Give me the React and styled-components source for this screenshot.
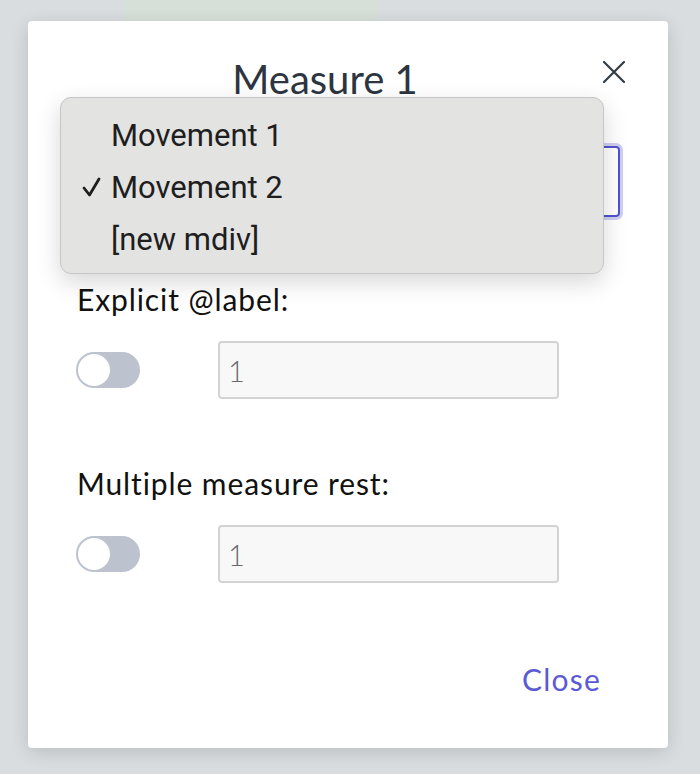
import React from 'react';
import styled, { createGlobalStyle } from 'styled-components';

const GlobalStyle = createGlobalStyle`
  html, body {
    margin: 0;
    padding: 0;
    background: #d9dddf;
  }
  * {
    box-sizing: border-box;
  }
`;

const Page = styled.div`
  width: 700px;
  height: 774px;
  overflow: hidden;
  background: #d9dddf;
  font-family: Lato, "Noto Sans", sans-serif;
`;

const BackStrip = styled.div`
  width: 254px;
  height: 21px;
  margin-left: 124px;
  background: #d6e0d9;
`;

const Modal = styled.div`
  position: relative;
  width: 640px;
  height: 727px;
  margin-left: 28px;
  background: #ffffff;
  border-radius: 4px;
  box-shadow: 0 4px 18px rgba(0, 0, 0, 0.14);
  display: flex;
  flex-direction: column;
  padding: 0 48px 0 49px;
`;

const Header = styled.div`
  display: flex;
  align-items: flex-start;
  padding-top: 35px;
`;

const Title = styled.h2`
  flex: 1;
  margin: 0 30px 0 0;
  text-align: center;
  font-weight: 400;
  font-size: 40px;
  line-height: 46px;
  color: #2c3541;
`;

const CloseIcon = styled.button`
  border: none;
  background: none;
  padding: 0;
  margin: 5px -5px 0 0;
  width: 22px;
  height: 22px;
  cursor: pointer;
  display: flex;
`;

const SelectBox = styled.div`
  margin-top: 44px;
  height: 71px;
  border: 2px solid #5252d0;
  border-radius: 4px;
  box-shadow: 0 0 0 3px #cfcff0;
`;

const Menu = styled.div`
  position: absolute;
  left: 32px;
  top: 76px;
  width: 544px;
  height: 177px;
  background: #e3e3e2;
  border: 1px solid #c6c6c6;
  border-radius: 11px;
  box-shadow: 0 8px 24px rgba(0, 0, 0, 0.16);
  padding-top: 11px;
  font-family: Roboto, "Liberation Sans", sans-serif;
`;

const MenuItem = styled.div`
  display: flex;
  align-items: center;
  height: 52px;
  font-size: 31px;
  color: #1e1e1e;
`;

const Check = styled.span`
  width: 50px;
  display: flex;
  justify-content: flex-end;
  padding-right: 10px;
`;

const Label = styled.div`
  font-size: 30px;
  line-height: 36px;
  letter-spacing: 0.9px;
  color: #111111;
  margin-top: ${p => p.$top}px;
`;

const Row = styled.div`
  display: flex;
  align-items: center;
  margin-top: ${p => p.$top}px;
`;

const Toggle = styled.div`
  width: 64px;
  height: 36px;
  border-radius: 18px;
  background: #bcc3ce;
  padding: 2px;
  margin-left: -1px;
  display: flex;
`;

const Knob = styled.div`
  width: 32px;
  height: 32px;
  border-radius: 50%;
  background: #ffffff;
`;

const NumberInput = styled.div`
  margin-left: 78px;
  width: 341px;
  height: 58px;
  background: #f8f8f8;
  border: 2px solid #d3d3d3;
  border-radius: 4px;
  padding-left: 8px;
  display: flex;
  align-items: center;
  font-size: 29px;
  font-weight: 300;
  color: #6a6a6a;
`;

const Footer = styled.div`
  margin-top: auto;
  display: flex;
  justify-content: flex-end;
  padding: 0 19px 51px 0;
`;

const CloseButton = styled.button`
  border: none;
  background: none;
  padding: 0;
  font-family: Lato, "Noto Sans", sans-serif;
  font-size: 30px;
  letter-spacing: 1.2px;
  color: #5a5ad4;
  cursor: pointer;
`;

const items = [
  { name: 'Movement 1', checked: false },
  { name: 'Movement 2', checked: true },
  { name: '[new mdiv]', checked: false },
];

const CheckMark = () => (
  <svg width="19" height="20" viewBox="0 0 19 20">
    <path d="M2 11 L7.5 18 L17 2" fill="none" stroke="#1e1e1e" strokeWidth="2.8" strokeLinecap="round" strokeLinejoin="round" />
  </svg>
);

export default function App() {
  return (
    <Page>
      <GlobalStyle />
      <BackStrip />
      <Modal>
        <Header>
          <Title>Measure 1</Title>
          <CloseIcon aria-label="close">
            <svg width="22" height="22" viewBox="0 0 22 22">
              <path d="M1 1 L21 21 M21 1 L1 21" stroke="#333c46" strokeWidth="2.2" strokeLinecap="round" />
            </svg>
          </CloseIcon>
        </Header>
        <SelectBox />
        <Label $top={64}>Explicit @label:</Label>
        <Row $top={24}>
          <Toggle><Knob /></Toggle>
          <NumberInput>1</NumberInput>
        </Row>
        <Label $top={66}>Multiple measure rest:</Label>
        <Row $top={24}>
          <Toggle><Knob /></Toggle>
          <NumberInput>1</NumberInput>
        </Row>
        <Footer>
          <CloseButton>Close</CloseButton>
        </Footer>
        <Menu>
          {items.map(item => (
            <MenuItem key={item.name}>
              <Check>{item.checked && <CheckMark />}</Check>
              {item.name}
            </MenuItem>
          ))}
        </Menu>
      </Modal>
    </Page>
  );
}
